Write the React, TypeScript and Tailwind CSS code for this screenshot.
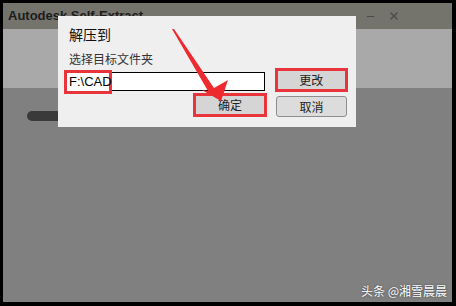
import { X, Minus } from 'lucide-react';

const cjk = { fontFamily: '"Noto Sans CJK SC", "Liberation Sans", sans-serif' };

function WinButton({ label, flagged }: { label: string; flagged?: boolean }) {
  return (
    <div
      className={
        flagged
          ? 'flex h-[24px] w-[74px] items-center justify-center border-[3px] border-[#e8353b] bg-[#d5d5d5]'
          : 'flex h-[21px] w-[71px] items-center justify-center rounded-[3px] border border-[#8e8e8e] bg-[#dcdcdc]'
      }
    >
      <span className="text-[12px] leading-none text-[#222]" style={cjk}>{label}</span>
    </div>
  );
}

export default function App() {
  return (
    <div className="relative h-[306px] w-[456px] overflow-hidden bg-black pt-[3px] pr-[4px] pb-[4px] pl-[3px]">
      <div className="flex h-full flex-col">
        {/* title bar */}
        <div className="flex h-[26px] items-center bg-[#74746d] pl-[5px] pr-[52px]">
          <span
            className="text-[13px] font-bold text-[#1c1c1c]"
            style={{ fontFamily: '"Liberation Sans", Arial, sans-serif' }}
          >
            Autodesk Self-Extract
          </span>
          <div className="ml-auto flex items-center gap-[12px] text-[#4a4a46]">
            <Minus size={11} strokeWidth={2.5} />
            <X size={12} strokeWidth={2.5} />
          </div>
        </div>
        <div className="h-[59px] bg-[#a9a9a9]" />
        <div className="flex-1 bg-[#808080] pt-[23px] pl-[24px]">
          <div className="h-[10px] w-[80px] rounded-full bg-[#3a3a3a]" />
        </div>
      </div>

      {/* dialog */}
      <div className="absolute left-[58px] top-[16px] flex h-[111px] w-[298px] flex-col bg-[#efefef] pl-[7px] pr-[8px]" style={cjk}>
        <div className="pl-[4px] pt-[8px] text-[14px] leading-[20px] text-[#111]">解压到</div>
        <div className="pl-[4px] pt-[7px] text-[12px] leading-[16px] text-[#333]">选择目标文件夹</div>
        <div className="mt-[1px] flex items-start gap-[10px]">
          <div className="mt-[4px] flex h-[19px] w-[201px] items-center border border-black bg-white">
            <div className="-ml-[2px] flex h-[24px] w-[48px] items-center border-[3px] border-[#e8353b] bg-white pl-[2px]">
              <span className="text-[13px] leading-none text-black" style={{ fontFamily: '"Liberation Sans", Arial, sans-serif' }}>F:\CAD</span>
            </div>
          </div>
          <WinButton label="更改" flagged />
        </div>
        <div className="mt-[1px] flex items-center">
          <div className="ml-[128px]">
            <WinButton label="确定" flagged />
          </div>
          <div className="ml-[9px] mt-[3px]">
            <WinButton label="取消" />
          </div>
        </div>
      </div>

      {/* red arrow annotation */}
      <svg className="absolute left-0 top-0" width="456" height="306" viewBox="0 0 456 306">
        <polygon points="172,29 174,29 214,88 228,80 221,101 202,90 208,91" fill="#ee2a2f" />
      </svg>

      {/* watermark */}
      <div
        className="absolute bottom-[9px] right-[9px] text-[12px] leading-none text-white"
        style={{ ...cjk, textShadow: '0 0 2px rgba(0,0,0,0.6)' }}
      >
        头条 @湘雪晨晨
      </div>
    </div>
  );
}
